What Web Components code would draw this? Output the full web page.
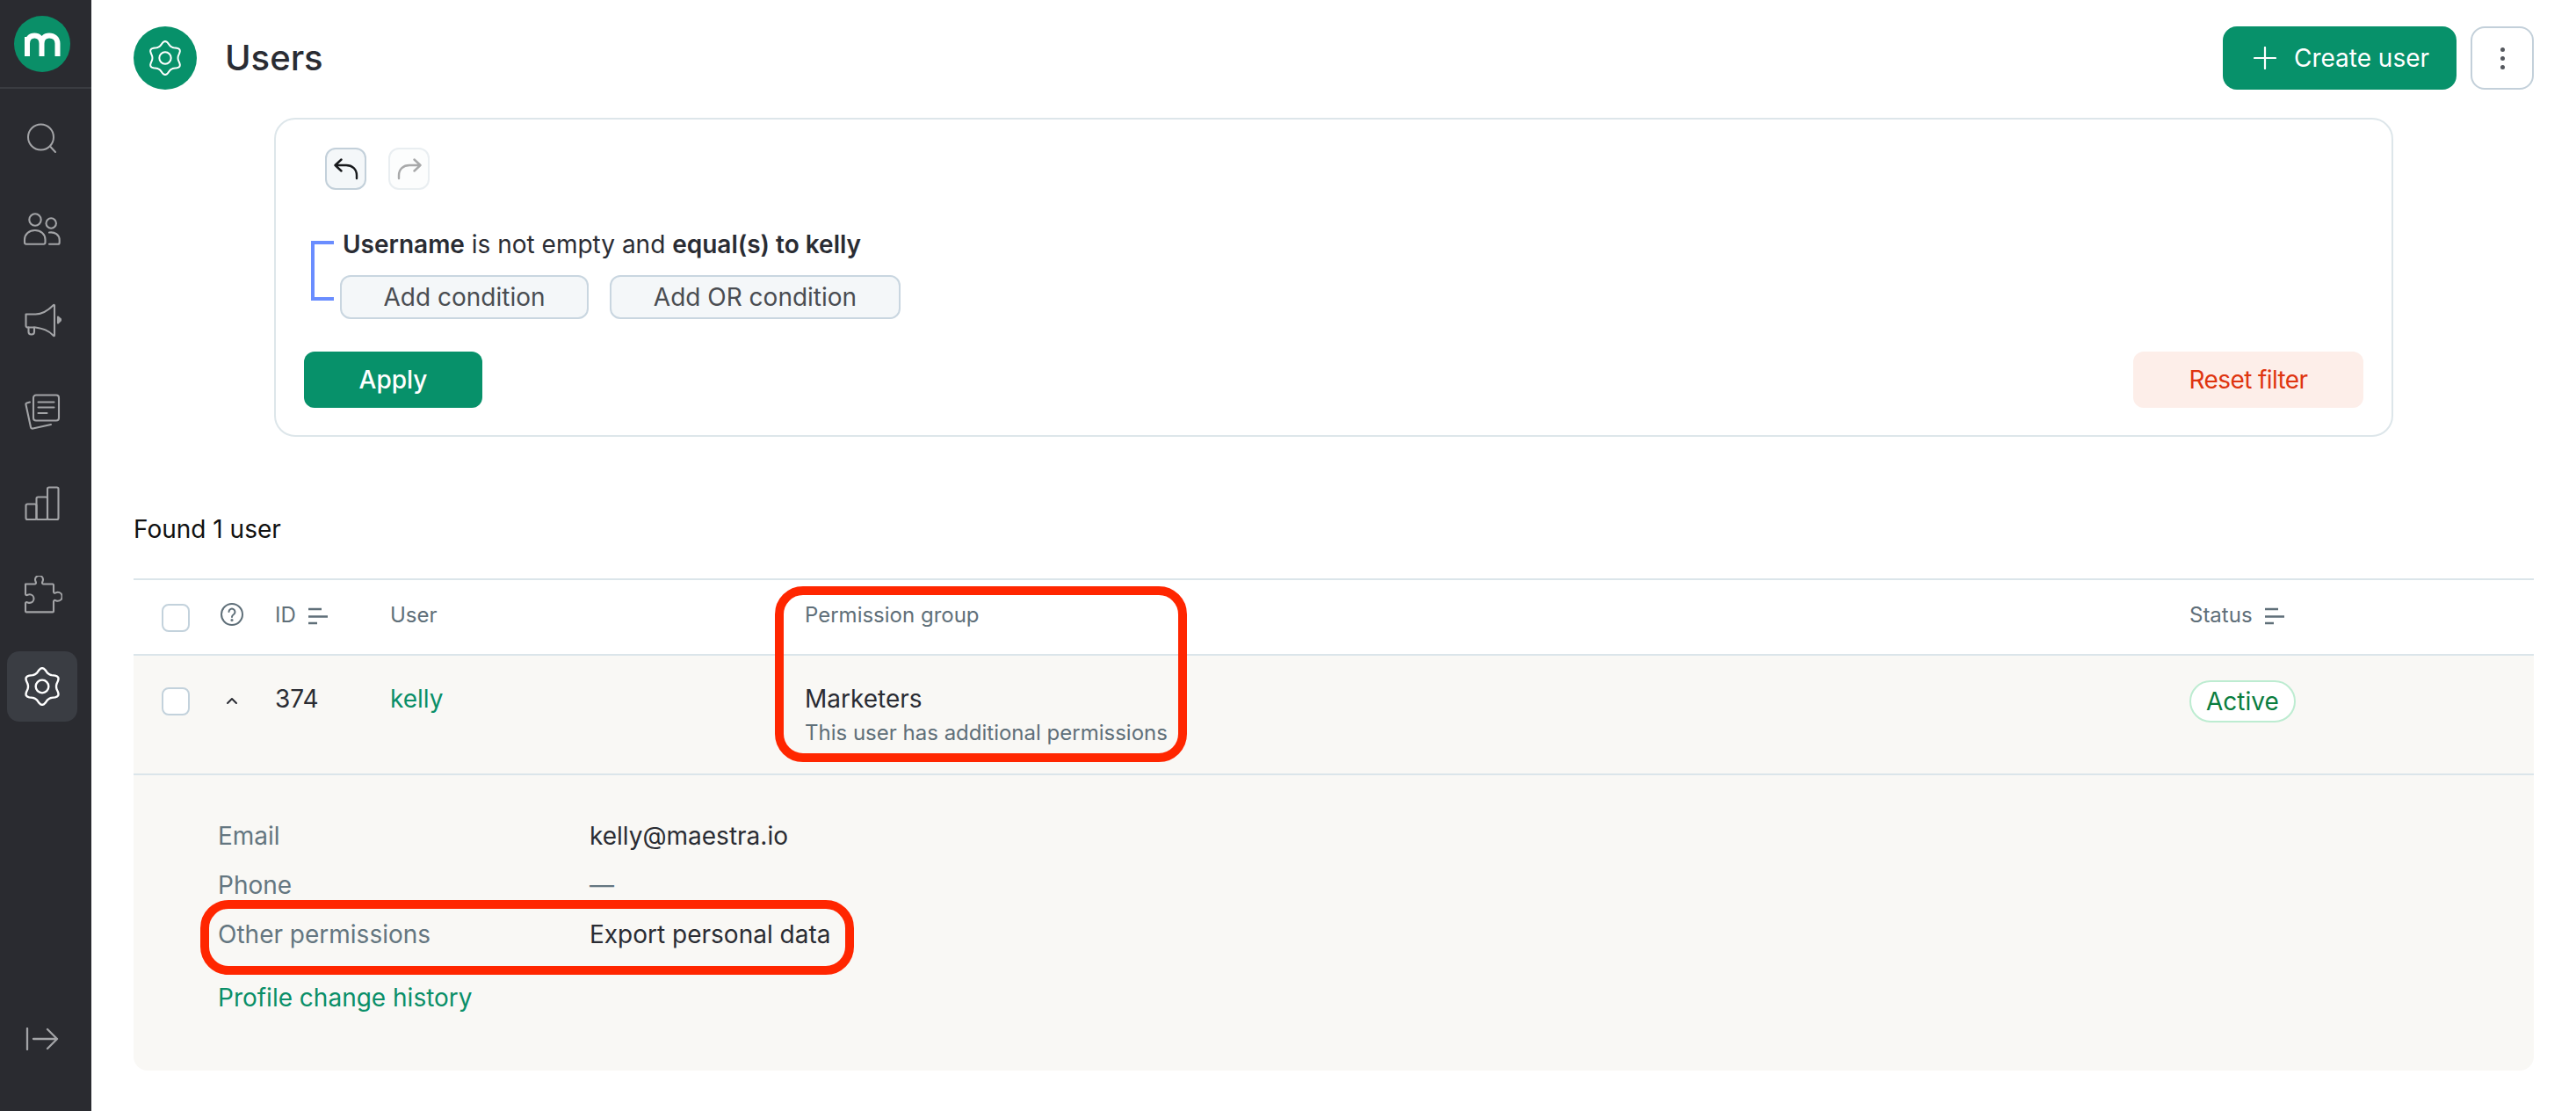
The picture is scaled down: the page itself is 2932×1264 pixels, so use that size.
<!DOCTYPE html>
<html><head><meta charset="utf-8"><style>
html,body{margin:0;padding:0;background:#fff;height:100%;overflow:hidden}
body{font-family:Inter,"Liberation Sans",sans-serif;font-size:28px;color:#2a2c33}
app-shell{height:1264px}
</style></head><body>
<app-shell>
  <side-nav slot="nav"></side-nav>
  <page-head title="Users"></page-head>
  <filter-card></filter-card>
  <user-table></user-table>
</app-shell>
<script>
const def=(n,h)=>{customElements.define(n,class extends HTMLElement{constructor(){super();this.attachShadow({mode:'open'}).innerHTML=h;}})};
const wave=(()=>{let d='';for(let i=0;i<72;i++){const t=i/72*2*Math.PI;const r=9.9+1.35*Math.cos(6*t)+.18*Math.cos(12*t);const x=12+r*Math.sin(t),y=12-r*Math.cos(t);d+=(i?'L':'M')+x.toFixed(2)+' '+y.toFixed(2)}return d+'Z'})();
const gear=`<path d="${wave}"/><circle cx="12" cy="12" r="4"/>`;
const svg=(w,inner,col,sw)=>`<svg width="${w}" height="${w}" viewBox="0 0 24 24" fill="none" stroke="${col}" stroke-width="${sw}" stroke-linecap="round" stroke-linejoin="round" style="display:block">${inner}</svg>`;
const sortIcon=`<svg width="22" height="20" viewBox="0 0 22 20" style="display:block;margin-top:2px" fill="none" stroke="#5f6f79" stroke-width="2.4"><path d="M0 2h15M0 10.500h22M0 18h10"/></svg>`;

def('app-shell',`<style>:host{display:flex;width:2932px;height:1264px}
.main{flex:1;min-width:0;padding:30px 48px 0 48px;box-sizing:border-box;display:flex;flex-direction:column}</style>
<slot name="nav"></slot><div class="main"><slot></slot></div>`);

def('nav-item',`<style>:host{display:flex;justify-content:center;align-items:center;width:80px;height:80px;flex:none;border-radius:14px;margin-bottom:24px}
:host([active]){background:#3a3d43}
:host([last]){margin-bottom:0}
:host([foot]){margin:auto 0 42px}</style><slot></slot>`);

def('side-nav',`<style>:host{display:flex;flex-direction:column;width:104px;flex:none;height:1264px;background:#2a2b30;box-sizing:border-box}
.top{height:101px;box-sizing:border-box;border-bottom:2px solid #3a3c41;display:flex;justify-content:center;padding:18px 8px 0 0}
.logo{width:64px;height:64px;border-radius:50%;background:#0a8f68;display:flex;align-items:center;justify-content:center}
.list{display:flex;flex-direction:column;align-items:center;padding:16px 8px 0 0;flex:1}
</style>
<div class="top"><div class="logo"><svg width="41" height="28" viewBox="0 0 41 28" fill="none" stroke="#fff" stroke-width="6"><path d="M3 28V6M3 13.500c0-6 3.500-9 8.300-9s8.200 3 8.200 9V28M19.500 13.500c0-6 3.500-9 8.500-9s9.500 3 9.500 9V28"/></svg></div></div>
<div class="list">
<nav-item><svg width="36" height="36" viewBox="0 0 36 36" fill="none" stroke="#a3a4a7" stroke-width="2" stroke-linecap="round"><circle cx="16.500" cy="17" r="14.500"/><path d="M27.500 28l5.500 6"/></svg></nav-item>
<nav-item><svg width="44" height="38" viewBox="0 0 44 38" fill="none" stroke="#a3a4a7" stroke-width="2.100" stroke-linejoin="round" stroke-linecap="round"><circle cx="14" cy="8" r="6.700"/><circle cx="32.200" cy="12" r="5.700"/><path d="M4 35.800h19.500a2 2 0 0 0 2-2v-3.300c0-6-5-10.500-11.700-10.500S2 24.500 2 30.500v3.300c0 1 .9 2 2 2z"/><path d="M30 22.500c6.500-1 11.500 2.700 11.700 8.500v3c0 1-.8 1.800-1.800 1.800H30"/></svg></nav-item>
<nav-item><svg width="44" height="40" viewBox="0 0 44 40" fill="none" stroke="#a3a4a7" stroke-width="2.100" stroke-linejoin="round" stroke-linecap="round"><path d="M3.500 12.500h11c8 0 14-4 20.500-10.500a.6.600 0 0 1 1 .5v34a.6.600 0 0 1-1 .5C29 30.500 23 29 14.500 27.500h-9a2 2 0 0 1-2-2z"/><path d="M6.500 27.500v5a3 3 0 0 0 3 3h.5a3 3 0 0 0 3-3v-5"/><path d="M40 15.500l2.500 2.200a1.500 1.500 0 0 1 0 2.400L40 22.500z" fill="#a3a4a7"/></svg></nav-item>
<nav-item><svg width="42" height="42" viewBox="0 0 42 42" fill="none" stroke="#a3a4a7" stroke-width="2.100" stroke-linejoin="round" stroke-linecap="round"><rect x="11" y="1.500" width="29" height="29" rx="3"/><path d="M16.500 9.500h18M16.500 15.500h18M16.500 22h10"/><path d="M7 9.500l-3.500 1a1.500 1.500 0 0 0-1 2l5.500 25.500a2 2 0 0 0 2.500 1.500L31 35"/></svg></nav-item>
<nav-item><svg width="40" height="40" viewBox="0 0 40 40" fill="none" stroke="#a3a4a7" stroke-width="2.100" stroke-linejoin="round"><rect x="1.500" y="20.500" width="12" height="17.500" rx="1.800"/><rect x="13.500" y="12.500" width="12.500" height="25.500" rx="1.800"/><rect x="26" y="1.500" width="12.500" height="36.500" rx="1.800"/></svg></nav-item>
<nav-item><svg width="44" height="44" viewBox="0 0 44 44" fill="none" stroke="#a3a4a7" stroke-width="2.100" stroke-linejoin="round" stroke-linecap="round" style="margin-left:2px"><path d="M2 9.500h10.500a1.500 1.500 0 0 0 1.400-2c-.4-1-.9-2-.9-3a4.500 4.500 0 0 1 9 0c0 1-.5 2-.9 3a1.500 1.500 0 0 0 1.400 2H33a1.500 1.500 0 0 1 1 1v7.700c0 1 .8 1.700 1.700 1.500.9-.3 1.800-.9 3-.9a5 5 0 0 1 0 10c-1.200 0-2.100-.6-3-.9-.9-.2-1.700.5-1.700 1.500v11a1 1 0 0 1-1 1H3a1 1 0 0 1-1-1v-9c0-.9.800-1.500 1.800-1.200 1 .3 1.900.7 2.900.7a4.800 4.800 0 0 0 0-9.600c-1 0-1.900.4-2.900.7C2.800 22.300 2 21.700 2 20.800z"/></svg></nav-item>
<nav-item active last>${svg(44,gear,'#fff',1.3)}</nav-item>
<nav-item foot><svg width="38" height="26" viewBox="0 0 38 26" fill="none" stroke="#a3a4a7" stroke-width="2.300" stroke-linecap="round" stroke-linejoin="round" style="display:block"><path d="M2 1v24M9 13h27M25 2l11 11-11 11"/></svg></nav-item>
</div>`);

def('app-button',`<style>:host{display:inline-flex;align-items:center;justify-content:center;box-sizing:border-box;font-size:28px;border-radius:14px;white-space:nowrap}
:host([kind=primary]){background:#07916a;color:#fff;font-weight:500}
:host([kind=secondary]){background:#f4f7f9;color:#4a4d52;border:2px solid #c9d6e0;border-radius:12px}
:host([kind=danger]){background:#fdeee9;color:#df3510;letter-spacing:-.6px}
:host([kind=ghost]){background:#fff;border:2px solid #c3d0da;border-radius:16px}
:host([kind=soft]){background:#f4f7f9;border:2px solid #c3d0da;border-radius:12px}
:host([kind=soft-off]){background:#fcfdfd;border:2px solid #e9eef1;border-radius:12px}</style><slot></slot>`);

def('page-head',`<style>:host{display:flex;align-items:center;height:72px;flex:none}
.ic{width:72px;height:72px;border-radius:50%;background:#07916a;display:flex;align-items:center;justify-content:center;flex:none}
h1{margin:0 0 0 32px;font-size:40px;font-weight:500;color:#2a2c33;line-height:72px}
.sp{flex:1}
.cr{width:266px;height:72px;border-radius:16px}
.cr span{display:inline-flex;align-items:center;gap:20px;font-weight:400;margin-left:4px}
.mo{width:72px;height:72px;margin-left:16px}
.dots{display:flex;flex-direction:column;gap:5px}
.dots i{display:block;width:5px;height:5px;border-radius:50%;background:#55585e}
</style>
<div class="ic">${svg(40,gear,'#fff',1.2)}</div><h1>Users</h1><div class="sp"></div>
<app-button kind="primary" class="cr"><span><svg width="26" height="26" viewBox="0 0 26 26" stroke="#fff" stroke-width="2.200" stroke-linecap="round"><path d="M13 1v24M1 13h24"/></svg>Create user</span></app-button>
<app-button kind="ghost" class="mo"><span class="dots"><i></i><i></i><i></i></span></app-button>`);

def('filter-card',`<style>:host{display:block;box-sizing:border-box;margin:32px 0 0 160px;width:2412px;height:363px;border:2px solid #dde6ea;border-radius:24px;padding:32px 32px 0 32px;flex:none}
.hist{display:flex;gap:25px;margin-left:24px}
.hist app-button{width:47px;height:48px}
.cond{display:flex;margin:46px 0 0 8px}
.br{box-sizing:content-box;width:22px;height:60px;margin:12px 4px 0 0;border:4px solid #6a8dff;border-right:0;flex:none}
.text{line-height:32px;color:#2a2c33;margin-left:6px;white-space:nowrap;height:51px}
b{font-weight:600}
.adds{display:flex;gap:24px;margin-left:3px}
.adds app-button{height:50px}
.foot{display:flex;justify-content:space-between;margin-top:37px}
.foot app-button{height:64px;border-radius:12px}
</style>
<div class="hist">
<app-button kind="soft"><svg width="28" height="25" viewBox="0 0 28 25" fill="none" stroke="#17191c" stroke-width="2.400" stroke-linecap="round" stroke-linejoin="round"><path d="M8.500 1.500L1.500 8l7 6.500M1.500 8H14c7 0 12 4.500 12 11.500V23"/></svg></app-button>
<app-button kind="soft-off"><svg width="28" height="25" viewBox="0 0 28 25" fill="none" stroke="#a8a9aa" stroke-width="2.400" stroke-linecap="round" stroke-linejoin="round"><path d="M19.500 1.500l7 6.500-7 6.500M26.500 8H14C7 8 2 12.500 2 19.500V23"/></svg></app-button>
</div>
<div class="cond"><div class="br"></div><div>
<div class="text"><b>Username</b> is not empty and <b>equal(s) to kelly</b></div>
<div class="adds"><app-button kind="secondary" style="width:283px">Add condition</app-button><app-button kind="secondary" style="width:331px">Add OR condition</app-button></div>
</div></div>
<div class="foot"><app-button kind="primary" style="width:203px">Apply</app-button><app-button kind="danger" style="width:262px">Reset filter</app-button></div>`);

def('red-mark',`<style>:host{position:absolute;box-sizing:border-box;border:10px solid #ff2600;border-radius:32px;pointer-events:none}</style>`);

def('user-table',`<style>:host{display:block;flex:none;position:relative;margin-top:88px;width:2732px}
.found{font-size:28px;line-height:34px;color:#111;height:73px}
.cols{display:grid;grid-template-columns:161px 131px 472px 1576px 1fr}
.head{border-top:2px solid #dbe5ea;border-bottom:2px solid #dbe5ea;height:88px;box-sizing:border-box;font-size:24px;color:#5f6f79;align-items:start;padding-top:25px;line-height:30px}
.row{background:#f9f8f5;height:136px;box-sizing:border-box;border-bottom:2px solid #dbe5ea;padding-top:29px;line-height:40px}
.cell{display:flex;gap:14px;align-items:center;height:30px}
.cb{width:32px;height:32px;box-sizing:border-box;border:2px solid #c3d2dc;border-radius:8px;background:#fff;flex:none}
.ctl{height:30px;display:flex;padding-left:32px;gap:35px}
a{color:#0a8f68;text-decoration:none}
.sub{font-size:24px;color:#5f6f79;line-height:30px;margin-top:4px}
.pill{display:inline-flex;align-items:center;height:48px;box-sizing:border-box;padding:0 17px;border:2px solid #bdecd1;border-radius:24px;background:#fff;color:#0a7d3e;margin-top:-1px}
.det{background:#f9f8f5;height:336px;box-sizing:border-box;border-radius:0 0 16px 16px;padding:49px 0 0 96px;line-height:40px}
.dr{display:grid;grid-template-columns:423px 1fr;height:56px}
.dr span:first-child,.dash{color:#647680}
.val{color:#2a2c33}
.link{display:block;margin-top:16px}
</style>
<div class="found">Found 1 user</div>
<div class="cols head">
  <div class="ctl"><span class="cb" style="margin-top:2px"></span><svg width="26" height="26" viewBox="0 0 26 26" fill="none" stroke="#5f6f79" stroke-width="2" stroke-linecap="round" style="margin-top:1px;flex:none"><circle cx="13" cy="13" r="12"/><path d="M9.500 10a3.500 3.500 0 1 1 5.500 3c-1.300.8-2 1.400-2 3"/><circle cx="13" cy="19.500" r=".6" fill="#5f6f79"/></svg></div>
  <div class="cell"><span>ID</span>${sortIcon}</div>
  <div class="cell">User</div>
  <div class="cell">Permission group</div>
  <div class="cell">Status ${sortIcon}</div>
</div>
<div class="cols row">
  <div class="ctl" style="height:40px"><span class="cb" style="margin-top:7px"></span><svg width="14" height="10" viewBox="0 0 14 10" fill="none" stroke="#2a2c33" stroke-width="2" stroke-linecap="round" stroke-linejoin="round" style="margin:17px 0 0 6px;flex:none"><path d="M2 8l5-5 5 5"/></svg></div>
  <div>374</div>
  <div><a>kelly</a></div>
  <div>Marketers<div class="sub">This user has additional permissions</div></div>
  <div><span class="pill">Active</span></div>
</div>
<div class="det">
  <div class="dr"><span>Email</span><span class="val">kelly@maestra.io</span></div>
  <div class="dr"><span>Phone</span><span class="dash">—</span></div>
  <div class="dr"><span>Other permissions</span><span class="val">Export personal data</span></div>
  <a class="link">Profile change history</a>
</div>
<red-mark style="left:730px;top:82px;width:469px;height:200px"></red-mark>
<red-mark style="left:76px;top:439px;width:744px;height:85px"></red-mark>`);
</script>
</body></html>
